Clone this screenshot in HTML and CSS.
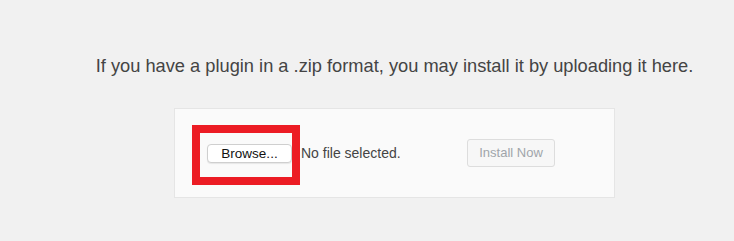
FILE: index.html
```html
<!DOCTYPE html>
<html>
<head>
<meta charset="utf-8">
<link rel="stylesheet" href="styles.css">
</head>
<body>
<main class="wrap">
  <p class="install-help">If you have a plugin in a .zip format, you may install it by uploading it here.</p>
  <form class="upload-form">
    <div class="file-field">
      <span class="browse-wrap">
        <button type="button" class="browse">Browse...</button>
        <span class="highlight"></span>
      </span>
      <span class="file-status">No file selected.</span>
    </div>
    <button type="button" class="install-btn" disabled>Install Now</button>
  </form>
</main>
</body>
</html>
```

FILE: styles.css
```css
html, body {
  margin: 0;
  padding: 0;
  background: #f1f1f1;
}
body {
  font-family: "Liberation Sans", Arial, sans-serif;
  color: #444;
  width: 734px;
  height: 241px;
  overflow: hidden;
}
.wrap {
  padding-left: 55px;
  padding-top: 1px;
}
.install-help {
  margin: 52px 0 0 0;
  text-align: center;
  font-size: 18.25px;
  line-height: 26px;
}
.upload-form {
  box-sizing: border-box;
  width: 441px;
  height: 90px;
  margin: 29px auto 0 auto;
  padding: 30px;
  background: #fafafa;
  border: 1px solid #e5e5e5;
  display: flex;
  align-items: center;
}
.file-field {
  width: 262px;
  display: flex;
  align-items: center;
}
.browse-wrap {
  position: relative;
  margin-left: 2px;
  display: inline-flex;
}
.browse {
  box-sizing: border-box;
  width: 85px;
  height: 19px;
  padding: 0;
  font-family: "Liberation Sans", Arial, sans-serif;
  font-size: 13.5px;
  color: #111;
  background: #fff;
  border: 1px solid #cfcfcf;
  border-radius: 4px;
  box-shadow: 0 1px 1px rgba(0,0,0,0.08);
}
.highlight {
  position: absolute;
  left: -15px;
  top: -19px;
  width: 108px;
  height: 60px;
  box-sizing: border-box;
  border: 8px solid #ec1c24;
  pointer-events: none;
}
.file-status {
  margin-left: 9px;
  font-size: 14px;
  color: #444;
}
.install-btn {
  box-sizing: border-box;
  height: 28px;
  padding: 0 10px 1px;
  font-family: "Liberation Sans", Arial, sans-serif;
  font-size: 13px;
  line-height: 26px;
  color: #a0a5aa;
  background: #f7f7f7;
  border: 1px solid #ddd;
  border-radius: 3px;
  width: 88px;
}
```
